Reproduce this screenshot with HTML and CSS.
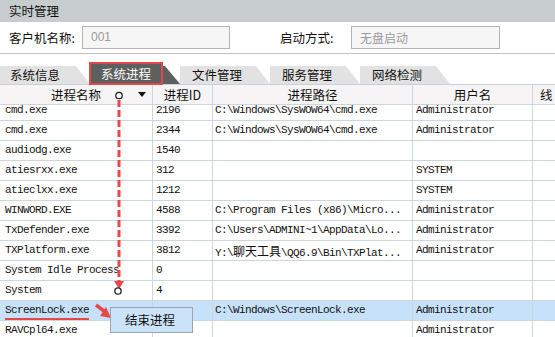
FILE: index.html
```html
<!DOCTYPE html>
<html>
<head>
<meta charset="utf-8">
<link rel="stylesheet" href="styles.css">
</head>
<body>
<div class="page">
  <div class="titlebar">实时管理</div>
  <div class="form">
    <span class="label l1">客户机名称:</span>
    <div class="input i1">001</div>
    <span class="label l2">启动方式:</span>
    <div class="input i2">无盘启动</div>
  </div>
  <div class="tabs">
    <div class="tab first"><span class="tab-text">系统信息</span></div>
    <div class="tab active"><span class="tab-text">系统进程</span></div>
    <div class="tab"><span class="tab-text">文件管理</span></div>
    <div class="tab"><span class="tab-text">服务管理</span></div>
    <div class="tab"><span class="tab-text">网络检测</span></div>
  </div>
  <div class="grid-wrap">
    <div class="row head">
      <div class="cell c1 sortable">进程名称<span class="sort"></span></div>
      <div class="cell c2">进程ID</div>
      <div class="cell c3">进程路径</div>
      <div class="cell c4">用户名</div>
      <div class="cell c5">线</div>
    </div>
    <div class="body">
      <div class="rows">
        <div class="row"><div class="cell c1">cmd.exe</div><div class="cell c2">2196</div><div class="cell c3">C:\Windows\SysWOW64\cmd.exe</div><div class="cell c4">Administrator</div><div class="cell c5"></div></div>
        <div class="row"><div class="cell c1">cmd.exe</div><div class="cell c2">2344</div><div class="cell c3">C:\Windows\SysWOW64\cmd.exe</div><div class="cell c4">Administrator</div><div class="cell c5"></div></div>
        <div class="row"><div class="cell c1">audiodg.exe</div><div class="cell c2">1540</div><div class="cell c3"></div><div class="cell c4"></div><div class="cell c5"></div></div>
        <div class="row"><div class="cell c1">atiesrxx.exe</div><div class="cell c2">312</div><div class="cell c3"></div><div class="cell c4">SYSTEM</div><div class="cell c5"></div></div>
        <div class="row"><div class="cell c1">atieclxx.exe</div><div class="cell c2">1212</div><div class="cell c3"></div><div class="cell c4">SYSTEM</div><div class="cell c5"></div></div>
        <div class="row"><div class="cell c1">WINWORD.EXE</div><div class="cell c2">4588</div><div class="cell c3">C:\Program Files (x86)\Micro...</div><div class="cell c4">Administrator</div><div class="cell c5"></div></div>
        <div class="row"><div class="cell c1">TxDefender.exe</div><div class="cell c2">3392</div><div class="cell c3">C:\Users\ADMINI~1\AppData\Lo...</div><div class="cell c4">Administrator</div><div class="cell c5"></div></div>
        <div class="row"><div class="cell c1">TXPlatform.exe</div><div class="cell c2">3812</div><div class="cell c3">Y:\<span class="cjk">聊天工具</span>\QQ6.9\Bin\TXPlat...</div><div class="cell c4">Administrator</div><div class="cell c5"></div></div>
        <div class="row"><div class="cell c1">System Idle Process</div><div class="cell c2">0</div><div class="cell c3"></div><div class="cell c4"></div><div class="cell c5"></div></div>
        <div class="row"><div class="cell c1">System</div><div class="cell c2">4</div><div class="cell c3"></div><div class="cell c4"></div><div class="cell c5"></div></div>
        <div class="row selected"><div class="cell c1"><span class="underlined">ScreenLock.exe</span></div><div class="cell c2"></div><div class="cell c3">C:\Windows\ScreenLock.exe</div><div class="cell c4">Administrator</div><div class="cell c5"></div></div>
        <div class="row"><div class="cell c1">RAVCpl64.exe</div><div class="cell c2">1952</div><div class="cell c3"></div><div class="cell c4">Administrator</div><div class="cell c5"></div></div>
      </div>
    </div>
  </div>

  <svg class="annot" width="555" height="337" viewBox="0 0 555 337">
    <line x1="119" y1="100" x2="119" y2="283" stroke="#e8484a" stroke-width="3" stroke-dasharray="7 3"/>
    <polygon points="114,281 124,281 119,289" fill="#e8484a"/>
    <circle cx="119" cy="95.5" r="3.2" fill="#fff" stroke="#222" stroke-width="1.3"/>
    <circle cx="118" cy="291" r="3.2" fill="#fff" stroke="#222" stroke-width="1.3"/>
    <line x1="96" y1="305" x2="104" y2="311" stroke="#e8484a" stroke-width="3.5"/>
    <polygon points="100,316 111,318 106,307" fill="#e8484a"/>
  </svg>

  <div class="menu">结束进程</div>
</div>
</body>
</html>
```
FILE: styles.css
```css
html, body {
  margin: 0;
  padding: 0;
}
body {
  width: 555px;
  height: 337px;
  overflow: hidden;
  background: #ffffff;
  font-family: "Noto Sans CJK SC", "Noto Sans", sans-serif;
  font-size: 12px;
  color: #111;
}
.page {
  position: relative;
  width: 555px;
  height: 337px;
  overflow: hidden;
}
.titlebar {
  height: 22px;
  line-height: 22px;
  background: #c7cccf;
  padding-left: 9px;
  font-size: 12.5px;
  color: #111;
}
.form {
  display: flex;
  align-items: center;
  height: 31px;
  border-bottom: 1px solid #c2c2c2;
  padding-left: 9px;
}
.label {
  font-size: 12.5px;
  color: #111;
}
.l1 { width: 73px; }
.l2 { width: 71px; margin-left: 50px; }
.input {
  box-sizing: border-box;
  height: 23px;
  line-height: 21px;
  border: 1px solid #b3b3b3;
  background: #f6f6f6;
  color: #9a9a9a;
  padding-left: 8px;
  font-size: 12px;
}
.i1 { width: 148px; font-family: "Liberation Sans", sans-serif; }
.i2 { width: 149px; }

.tabs {
  display: flex;
  height: 18px;
  margin-top: 12px;
}
.tab {
  position: relative;
  width: 90px;
  height: 18px;
  line-height: 18px;
  font-size: 12.5px;
  background: #e2e2e2;
  clip-path: polygon(0 0, 76px 0, 90px 100%, 0 100%);
}
.tab .tab-text {
  padding-left: 12px;
}
.tab.first .tab-text {
  padding-left: 10px;
}
.tab.active {
  background: transparent;
  clip-path: none;
  margin-left: -1px;
  width: 91px;
}
.tab.active::before {
  content: "";
  position: absolute;
  left: 0;
  top: 0;
  width: 91px;
  height: 18px;
  background: #5d605e;
  clip-path: polygon(0 0, 76px 0, 91px 100%, 0 100%);
}
.tab.active .tab-text {
  position: absolute;
  left: 0;
  top: -4px;
  box-sizing: border-box;
  width: 74px;
  height: 23px;
  line-height: 19px;
  padding: 0;
  text-align: center;
  color: #ffffff;
  background: #5d605e;
  border: 2px solid #e2484a;
}

.grid-wrap {
  border-top: 1px solid #c9d0d7;
}
.row {
  display: grid;
  grid-template-columns: 153px 60px 200px 120px 60px;
  height: 20px;
}
.cell {
  box-sizing: border-box;
  height: 20px;
  border-right: 1px solid #cdd5dd;
  border-bottom: 1px solid #cdd5dd;
  line-height: 19px;
  padding-left: 5px;
  white-space: nowrap;
  overflow: hidden;
  font-family: "Liberation Mono", monospace;
  font-size: 11px;
  letter-spacing: -0.6px;
}
.cell.c2 { padding-left: 3px; }
.cell.c3 { padding-left: 2px; }
.cell.c4 { padding-left: 3px; }
.cjk {
  font-family: "Noto Sans CJK SC", sans-serif;
  font-size: 12px;
  letter-spacing: 0;
}
.head {
  background: #f6f4f4;
}
.head .cell {
  font-family: "Noto Sans CJK SC", sans-serif;
  font-size: 12.5px;
  letter-spacing: 0;
  text-align: center;
  padding-left: 0;
}
.head .cell.c5 {
  text-align: left;
  padding-left: 7px;
}
.sortable {
  position: relative;
}
.sort {
  position: absolute;
  left: 138px;
  top: 7px;
  width: 0;
  height: 0;
  border-left: 4.5px solid transparent;
  border-right: 4.5px solid transparent;
  border-top: 5px solid #111;
}
.body {
  height: 232px;
  overflow: hidden;
}
.rows {
  margin-top: -4px;
}
.row.selected {
  background: #c6e1f9;
}
.underlined {
  display: inline-block;
  border-bottom: 2px solid #e2484a;
  line-height: 15px;
}

.annot {
  position: absolute;
  left: 0;
  top: 0;
  pointer-events: none;
}
.menu {
  position: absolute;
  left: 110px;
  top: 307px;
  box-sizing: border-box;
  width: 83px;
  height: 26px;
  line-height: 24px;
  border: 1px solid #9aa4ae;
  background: #cbe3f8;
  padding-left: 14px;
  font-size: 12.5px;
  color: #111;
}
```
